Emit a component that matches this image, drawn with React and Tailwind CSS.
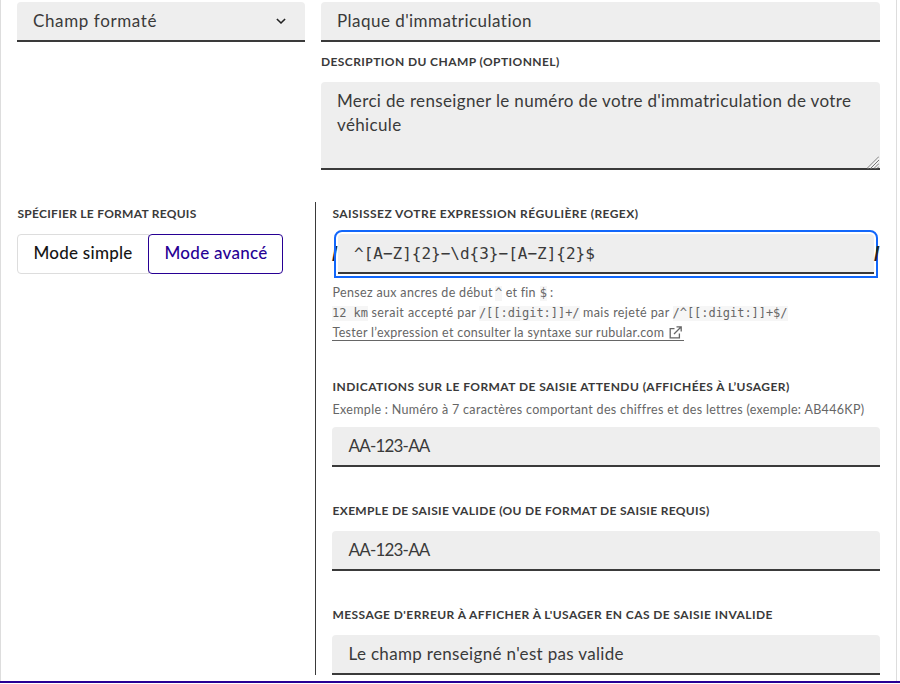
const fieldBox = "rounded-t border-b-2 border-[#3a3a3a] bg-[#eee] px-4";

function Label({ children, className }) {
  return (
    <div className={"h-6 whitespace-nowrap text-[12px] font-bold uppercase leading-6 text-[#3a3a3a] " + className}>
      {children}
    </div>
  );
}

function Field({ children, className = "" }) {
  return (
    <div className={`${fieldBox} flex h-10 items-center whitespace-nowrap text-[17px] leading-6 text-[#3a3a3a] ${className}`}>
      {children}
    </div>
  );
}

function Code({ children }) {
  return (
    <code className="block h-[15px] bg-[#f6f6f6] font-['DejaVu_Sans_Mono',monospace] text-[12px] leading-[15px] tracking-[-0.04px]">
      {children}
    </code>
  );
}

function Slash({ className }) {
  return (
    <span className={"w-0 whitespace-nowrap font-['Liberation_Sans',sans-serif] text-[20px] font-bold leading-[40px] text-[#222] " + className}>/</span>
  );
}

export default function App() {
  return (
    <div className="flex h-[684px] w-[900px] flex-col overflow-hidden bg-white font-['Lato',sans-serif]">
      <div className="h-[681px] w-[897px] shrink-0 border-x border-[#ddd] pl-4 pr-4 pt-0.5">
        <section className="flex h-[200px] gap-4">
          <div className="w-72 shrink-0">
            <Field className="justify-between pr-[18px] tracking-[0.62px]">
              <span>Champ formaté</span>
              <svg width="12" height="12" viewBox="0 0 12 12" fill="none" stroke="#222" strokeWidth="1.6">
                <path d="M1.9 4 6 8l4.1-4" />
              </svg>
            </Field>
          </div>
          <div className="w-[559px]">
            <Field className="tracking-[0.46px]">Plaque d'immatriculation</Field>
            <Label className="mt-2 tracking-[0.42px]">Description du champ (optionnel)</Label>
            <div className={`${fieldBox} relative mt-2 h-[88px] whitespace-nowrap pt-[7px] text-[17px] leading-6 tracking-[0.35px] text-[#3a3a3a]`}>
              Merci de renseigner le numéro de votre d'immatriculation de votre
              <br />
              véhicule
              <svg className="absolute -bottom-px right-px" width="12" height="13" viewBox="0 0 12 13" fill="none" stroke="#777" strokeWidth="1">
                <path d="M0 12.5 12 .5M3.5 12.5 12 4M7 12.5 12 7.5M10 12.5 12 10.5" />
                <path d="M1.2 12.5 12 1.7M4.7 12.5 12 5.2M8.2 12.5 12 8.7" stroke="#fff" strokeWidth="0.6" />
              </svg>
            </div>
          </div>
        </section>

        <section className="flex">
          <div className="w-[298px] shrink-0">
            <Label className="pl-[0.5px] tracking-[0.27px]">Spécifier le format requis</Label>
            <div className="mt-2 flex h-10 whitespace-nowrap text-[17px] font-medium leading-9">
              <div className="w-[132px] rounded-l border border-[#ddd] pl-[15.5px] tracking-[0.25px] text-[#161616]">Mode simple</div>
              <div className="-ml-px w-[135px] rounded border border-[#270094] pl-[15.5px] tracking-[0.28px] text-[#270094]">Mode avancé</div>
            </div>
          </div>

          <div className="h-[473px] w-[565px] border-l border-[#3a3a3a] pl-4">
            <Label className="pl-[0.5px] tracking-[0.43px]">Saisissez votre expression régulière (regex)</Label>
            <div className="mt-2 flex h-10">
              <Slash />
              <div className="ml-1.5 w-[536px] shrink-0 rounded-t outline-2 outline-offset-2 outline-[#1267fb]">
                <div className={`${fieldBox} h-10 font-['DejaVu_Sans_Mono',monospace] text-[16px] leading-10 text-[#3a3a3a]`}>
                  {"^[A−Z]{2}−\\d{3}−[A−Z]{2}$"}
                </div>
              </div>
              <Slash className="z-10" />
            </div>

            <div className="mt-[9px] flex h-5 items-center whitespace-nowrap text-[12.5px] text-[#666]">
              <span className="w-[163px] pl-[0.5px] tracking-[0.33px]">Pensez aux ancres de début</span>
              <Code>^</Code>
              <span className="ml-[3.5px] w-[34px] tracking-[0.25px]">et fin</span>
              <Code>$</Code>
              <span className="ml-[3px]">:</span>
            </div>
            <div className="flex h-5 items-center whitespace-nowrap text-[12.5px] text-[#666]">
              <Code>12 km</Code>
              <span className="ml-[3.5px] w-[107.5px] tracking-[0.45px]">serait accepté par</span>
              <Code>/[[:digit:]]+/</Code>
              <span className="ml-[3.5px] w-[89.5px] tracking-[0.4px]">mais rejeté par</span>
              <Code>/^[[:digit:]]+$/</Code>
            </div>
            <a className="flex h-[18px] w-[352px] items-center whitespace-nowrap border-b border-[#666] text-[12.5px] tracking-[0.31px] text-[#666]">
              <span className="w-[337px] pl-[0.5px] pt-[3px]">Tester l’expression et consulter la syntaxe sur rubular.com</span>
              <svg className="mt-0.5" width="13" height="13" viewBox="0 0 13 13" fill="none" stroke="#666" strokeWidth="1.3">
                <path d="M5.5 2.6H1.2v9.2h9.2V7.5M7.5.8h4.7v4.7M12 1 5 8" />
              </svg>
            </a>

            <Label className="mt-[34px] pl-[0.5px] tracking-[0.44px]">Indications sur le format de saisie attendu (affichées à l’usager)</Label>
            <div className="h-5 whitespace-nowrap pl-[0.5px] pt-px text-[12.5px] leading-5 tracking-[0.32px] text-[#666]">
              Exemple : Numéro à 7 caractères comportant des chiffres et des lettres (exemple: AB446KP)
            </div>
            <Field className="mt-2 pl-[16.5px] tracking-[-0.8px]">AA-123-AA</Field>

            <Label className="mt-8 pl-[0.5px] tracking-[0.34px]">Exemple de saisie valide (ou de format de saisie requis)</Label>
            <Field className="mt-2 pl-[16.5px] tracking-[-0.8px]">AA-123-AA</Field>

            <Label className="mt-8 pl-[0.5px] tracking-[0.43px]">Message d'erreur à afficher à l'usager en cas de saisie invalide</Label>
            <Field className="mt-2 pl-[16.5px] tracking-[0.33px]">Le champ renseigné n'est pas valide</Field>
          </div>
        </section>
      </div>
      <div className="h-0.5 shrink-0 bg-[#270094]" />
    </div>
  );
}
